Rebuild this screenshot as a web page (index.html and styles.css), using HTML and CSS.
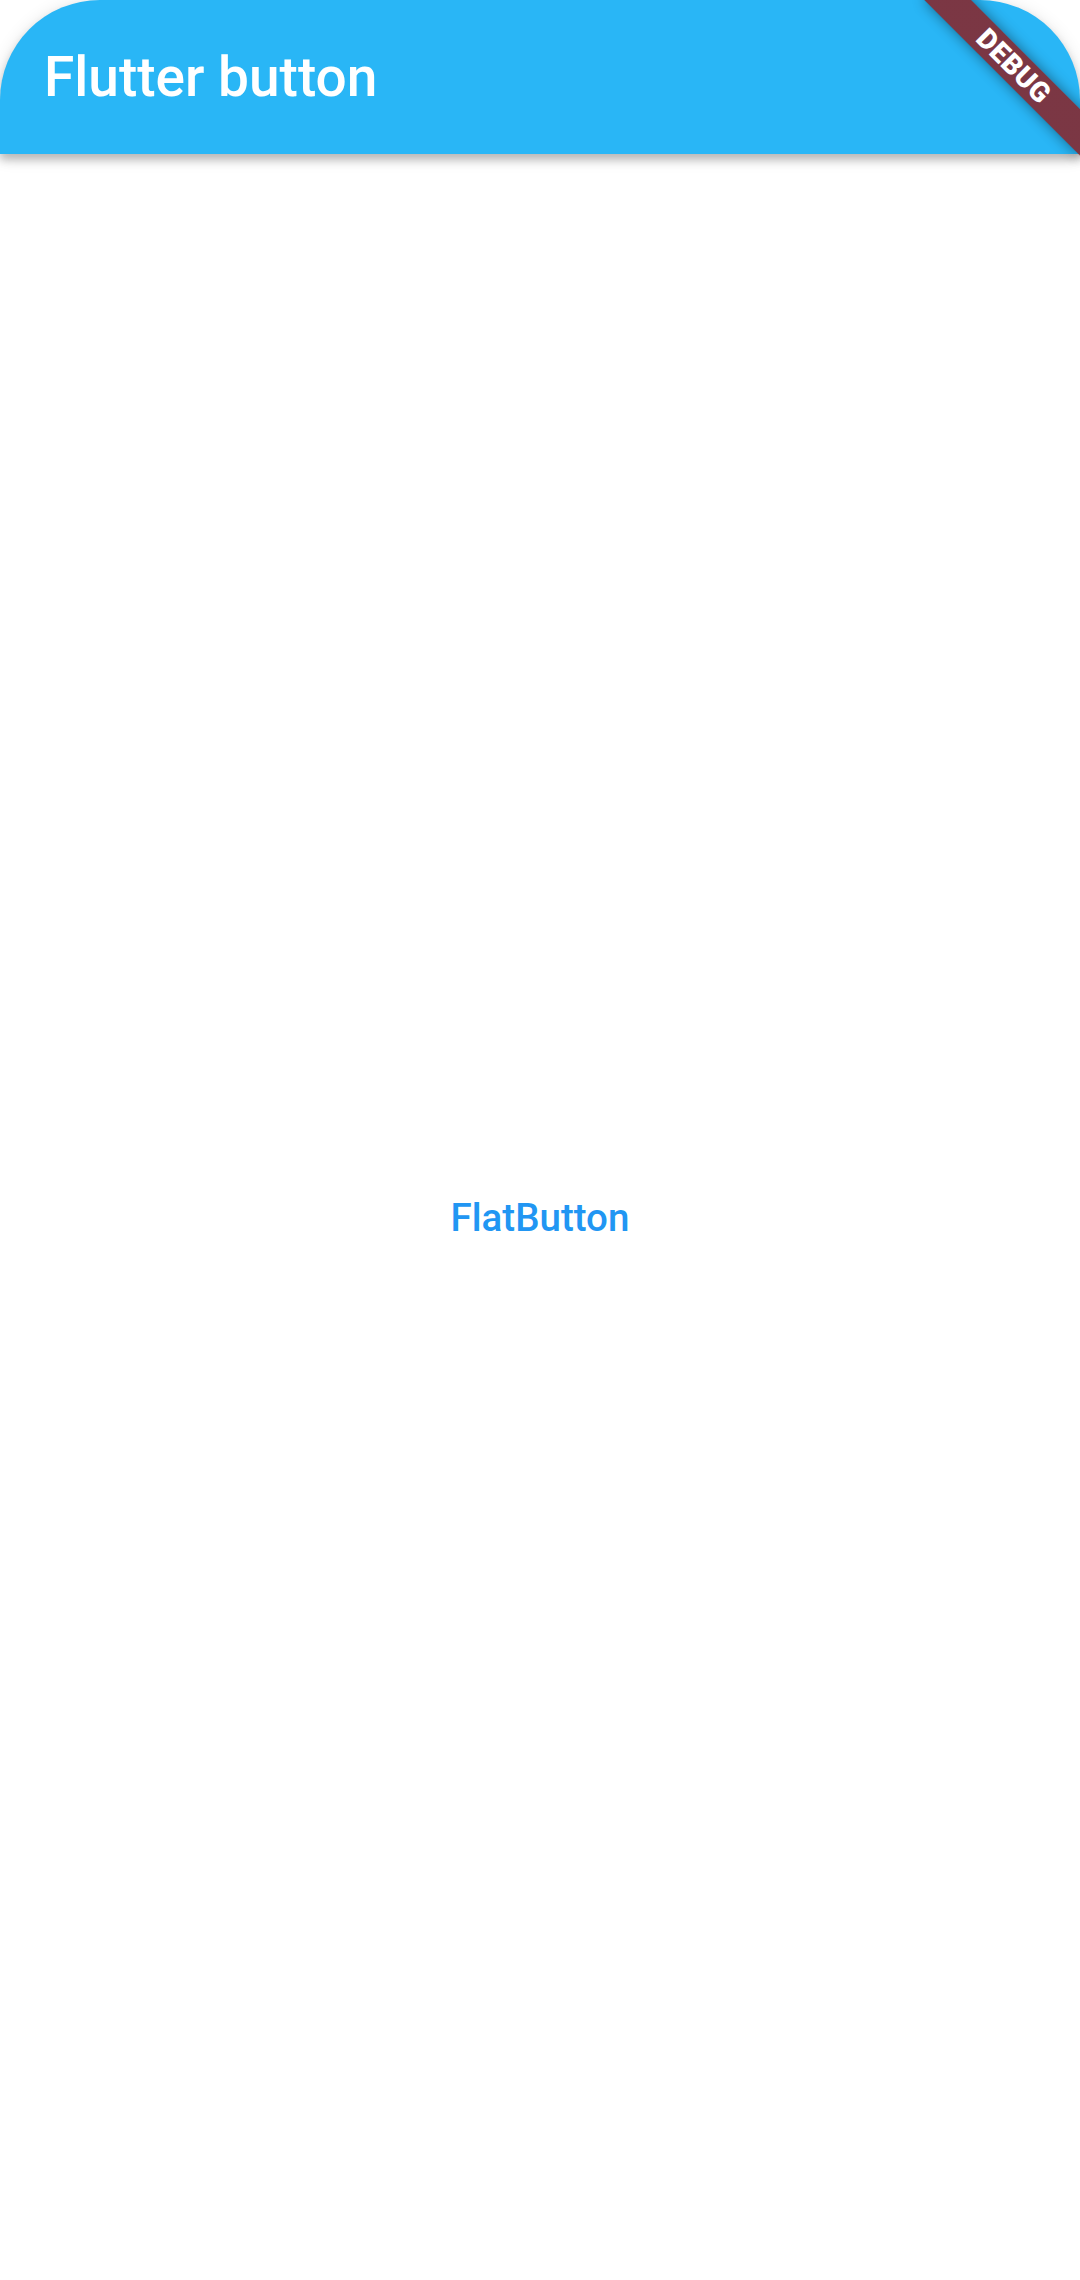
FILE: index.html
```html
<!DOCTYPE html>
<html>
<head>
<meta charset="utf-8">
<link rel="stylesheet" href="styles.css">
</head>
<body>
<div class="screen">
  <header class="appbar">
    <h1 class="title">Flutter button</h1>
  </header>
  <main class="content">
    <button class="flat-button">FlatButton</button>
  </main>
  <div class="banner-anchor">
    <div class="banner">DEBUG</div>
  </div>
</div>
</body>
</html>
```
FILE: styles.css
```css
html, body {
  margin: 0;
  padding: 0;
  background: #ffffff;
}
.screen {
  position: relative;
  width: 1080px;
  height: 2280px;
  overflow: hidden;
  display: flex;
  flex-direction: column;
  font-family: Roboto, "Noto Sans", sans-serif;
}
.appbar {
  height: 154px;
  flex: none;
  background: #29b6f6;
  border-radius: 100px 100px 0 0;
  display: flex;
  align-items: center;
  padding-left: 44px;
  box-shadow: 0 6px 8px rgba(0,0,0,0.22), 0 3px 18px rgba(0,0,0,0.12);
  position: relative;
  z-index: 1;
}
.title {
  margin: 0;
  color: #ffffff;
  font-size: 55px;
  font-weight: 500;
  line-height: 1;
}
.content {
  flex: 1;
  display: flex;
  align-items: center;
  justify-content: center;
}
.flat-button {
  background: transparent;
  border: none;
  padding: 0 44px;
  height: 99px;
  font-family: Roboto, "Noto Sans", sans-serif;
  font-size: 38.5px;
  font-weight: 500;
  color: #2196f3;
}
.banner-anchor {
  position: absolute;
  top: 0;
  right: 0;
  width: 0;
  height: 0;
  transform-origin: 0 0;
  transform: rotate(45deg);
  z-index: 5;
}
.banner {
  position: absolute;
  left: -110px;
  top: 77px;
  width: 220px;
  height: 33px;
  background: linear-gradient(rgba(183, 28, 28, 0.627), rgba(183, 28, 28, 0.627)), rgba(0, 0, 0, 0.45);
  box-shadow: 0 0 14px rgba(0,0,0,0.45);
  color: #ffffff;
  font-size: 28px;
  font-weight: 900;
  line-height: 33px;
  text-align: center;
  letter-spacing: 0.5px;
}
```
